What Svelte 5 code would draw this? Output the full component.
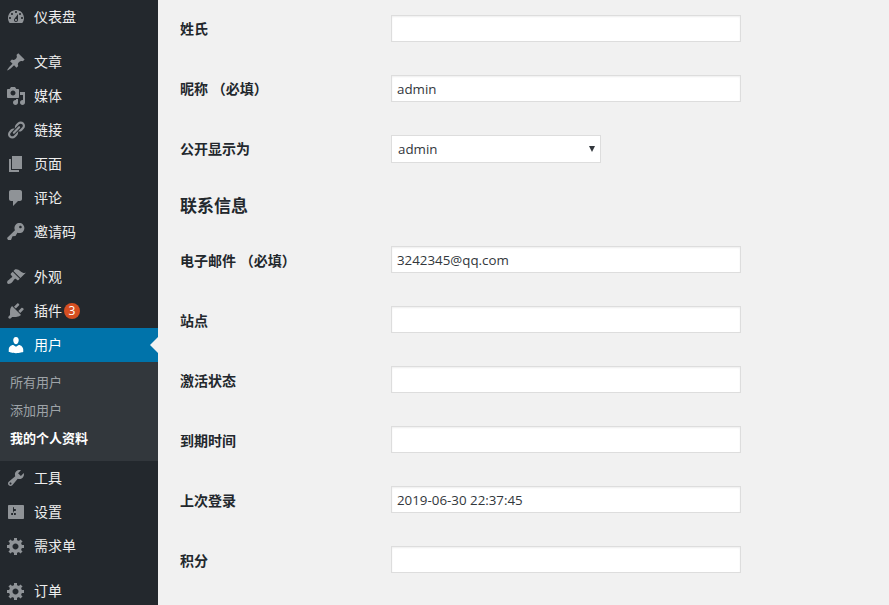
<script>
  // dashicons outlines used by the admin menu
  const icons = {
    dashboard: "M3.76 16h12.48c1.1-1.37 1.76-3.11 1.76-5 0-4.42-3.58-8-8-8s-8 3.58-8 8c0 1.89.66 3.63 1.76 5zM10 4c.55 0 1 .45 1 1s-.45 1-1 1-1-.45-1-1 .45-1 1-1zM6 6c.55 0 1 .45 1 1s-.45 1-1 1-1-.45-1-1 .45-1 1-1zm8 0c.55 0 1 .45 1 1s-.45 1-1 1-1-.45-1-1 .45-1 1-1zm-5.37 5.55L12 7v6c0 1.1-.9 2-2 2s-2-.9-2-2c0-.57.24-1.08.63-1.45zM4 10c.55 0 1 .45 1 1s-.45 1-1 1-1-.45-1-1 .45-1 1-1zm12 0c.55 0 1 .45 1 1s-.45 1-1 1-1-.45-1-1 .45-1 1-1zm-5 3c0-.55-.45-1-1-1s-1 .45-1 1 .45 1 1 1 1-.45 1-1z",
    post: "M10.44 3.02l1.82-1.82 6.36 6.35-1.83 1.82c-1.05-.68-2.48-.57-3.41.36l-.75.75c-.92.93-1.04 2.35-.35 3.41l-1.83 1.82-2.41-2.41-2.8 2.79c-.42.42-3.38 2.71-3.8 2.29s1.86-3.39 2.28-3.81l2.79-2.79L4.1 9.36l1.83-1.82c1.05.69 2.48.57 3.4-.36l.75-.75c.93-.92 1.05-2.35.36-3.41z",
    media: "M13 11V4c0-.55-.45-1-1-1h-1.67L9 1H5L3.67 3H2c-.55 0-1 .45-1 1v7c0 .55.45 1 1 1h10c.55 0 1-.45 1-1zM7 4.5c1.38 0 2.5 1.12 2.5 2.5S8.38 9.5 7 9.5 4.5 8.38 4.5 7 5.62 4.5 7 4.5zM14 6h5v10.5c0 1.38-1.12 2.5-2.5 2.5S14 17.88 14 16.5s1.12-2.5 2.5-2.5c.17 0 .34.02.5.05V9h-3V6zm-4 8.05V13h2v3.5c0 1.38-1.12 2.5-2.5 2.5S7 17.88 7 16.5 8.12 14 9.5 14c.17 0 .34.02.5.05z",
    links: "M17.74 2.76c1.68 1.69 1.68 4.41 0 6.1l-1.53 1.52c-1.12 1.12-2.7 1.47-4.14 1.09l2.62-2.61.76-.77.76-.76c.84-.84.84-2.2 0-3.04-.84-.85-2.2-.85-3.04 0l-.77.76-3.38 3.38c-.37-1.44-.02-3.02 1.1-4.14l1.52-1.53c1.69-1.68 4.42-1.68 6.1 0zM8.59 13.43l5.34-5.34c.42-.42.42-1.1 0-1.52-.44-.43-1.13-.39-1.53 0l-5.33 5.34c-.42.42-.42 1.1 0 1.52.44.43 1.13.39 1.52 0zm-.76 2.29l4.14-4.15c.38 1.44.03 3.02-1.09 4.14l-1.52 1.53c-1.69 1.68-4.41 1.68-6.1 0-1.68-1.68-1.68-4.42 0-6.1l1.53-1.52c1.12-1.12 2.7-1.47 4.14-1.1l-4.14 4.15c-.85.84-.85 2.2 0 3.05.84.84 2.2.84 3.04 0z",
    page: "M6 15V2h10v13H6zm-1 1h8v2H3V5h2v11z",
    comments: "M5 2h9c1.1 0 2 .9 2 2v7c0 1.1-.9 2-2 2h-2l-5 5v-5H5c-1.1 0-2-.9-2-2V4c0-1.1.9-2 2-2z",
    key: "M16.95 2.58c1.96 1.95 1.96 5.12 0 7.07-1.51 1.51-3.75 1.84-5.59 1.01l-1.87 3.31-2.99.31L5 18H2l-1-2 7.95-7.69c-.92-1.87-.62-4.18.93-5.73 1.95-1.96 5.12-1.96 7.07 0zm-2.51 3.79c.74 0 1.33-.6 1.33-1.34 0-.73-.59-1.33-1.33-1.33-.73 0-1.33.6-1.33 1.33 0 .74.6 1.34 1.33 1.34z",
    appearance: "M14.48 11.06L7.41 3.99l1.5-1.5c.5-.56 2.3-.47 3.51.32 1.21.8 1.43 1.28 2.91 2.1 1.18.64 2.45 1.26 4.45.85zm-.71.71L6.7 4.7 4.93 6.47c-.39.39-.39 1.02 0 1.41l1.06 1.06c.39.39.39 1.03 0 1.42-.6.6-1.43 1.11-2.21 1.69-.35.26-.7.53-1.01.84C1.43 13.23.5 15.64 1.5 16.5c.86 1 3.27.07 4.61-1.27.31-.31.58-.66.84-1.01.58-.78 1.09-1.61 1.69-2.21.39-.39 1.03-.39 1.42 0l1.06 1.06c.39.39 1.02.39 1.41 0z",
    plugins: "M13.11 4.36L9.87 7.6 8 5.73l3.24-3.24c.35-.34 1.05-.2 1.56.32.52.51.66 1.21.31 1.55zm-8 1.77l.91-1.12 9.01 9.01-1.19.84c-.71.71-2.63 1.16-3.82 1.16H6.14L4.9 17.26c-.59.59-1.54.59-2.12 0-.59-.58-.59-1.53 0-2.12l1.24-1.24v-3.88c0-1.13.4-3.19 1.09-3.89zm7.26 3.97l3.24-3.24c.34-.35 1.04-.21 1.55.31.52.51.66 1.21.31 1.55l-3.24 3.25z",
    users: "M10 9.25c-2.27 0-2.73-3.44-2.73-3.44C7 4.02 7.82 2 9.97 2c2.16 0 2.98 2.02 2.71 3.81 0 0-.41 3.44-2.68 3.44zm0 2.57L12.72 10c2.39 0 4.52 2.33 4.52 4.53v2.49s-3.65 1.13-7.24 1.13c-3.65 0-7.24-1.13-7.24-1.13v-2.49c0-2.25 1.94-4.48 4.47-4.48z",
    tools: "M16.68 9.77c-1.34 1.34-3.3 1.67-4.95.99l-5.41 6.52c-.99.99-2.59.99-3.58 0s-.99-2.59 0-3.57l6.52-5.42c-.68-1.65-.35-3.61.99-4.95 1.28-1.28 3.12-1.62 4.72-1.06l-2.89 2.89 2.82 2.82 2.86-2.87c.53 1.58.18 3.39-1.08 4.65zM3.81 16.21c.4.39 1.04.39 1.43 0 .4-.4.4-1.04 0-1.43-.39-.4-1.03-.4-1.43 0-.39.39-.39 1.03 0 1.43z",
    settings: "M18 16V4c0-.55-.45-1-1-1H3c-.55 0-1 .45-1 1v12c0 .55.45 1 1 1h14c.55 0 1-.45 1-1zM8 11h1c.55 0 1 .45 1 1s-.45 1-1 1H8v1.5c0 .28-.22.5-.5.5s-.5-.22-.5-.5V13H6c-.55 0-1-.45-1-1s.45-1 1-1h1V5.5c0-.28.22-.5.5-.5s.5.22.5.5V7h1c.55 0 1 .45 1 1s-.45 1-1 1h-1v5.5c0 .28-.22.5-.5.5s-.5-.22-.5-.5V9z",
    generic: "M18 12h-2.18c-.17.7-.44 1.35-.81 1.93l1.54 1.54-2.1 2.1-1.54-1.54c-.58.36-1.23.63-1.91.79V19H8v-2.18c-.68-.16-1.33-.43-1.91-.79l-1.54 1.54-2.12-2.12 1.54-1.54c-.36-.58-.63-1.23-.79-1.91H1V9.03h2.17c.16-.7.44-1.35.8-1.94L2.43 5.55l2.1-2.1 1.54 1.54c.58-.37 1.24-.64 1.93-.81V2h3v2.18c.68.16 1.33.43 1.91.79l1.54-1.54 2.12 2.12-1.54 1.54c.36.59.64 1.24.8 1.94H18V12zm-8.5 1.5c1.66 0 3-1.34 3-3s-1.34-3-3-3-3 1.34-3 3 1.34 3 3 3z"
  };

  const menu = [
    { label: "仪表盘", icon: "dashboard" },
    { label: "文章", icon: "post", sep: true },
    { label: "媒体", icon: "media" },
    { label: "链接", icon: "links" },
    { label: "页面", icon: "page" },
    { label: "评论", icon: "comments" },
    { label: "邀请码", icon: "key" },
    { label: "外观", icon: "appearance", sep: true },
    { label: "插件", icon: "plugins", badge: 3 },
    { label: "用户", icon: "users", active: true, sub: ["所有用户", "添加用户", "我的个人资料"] },
    { label: "工具", icon: "tools" },
    { label: "设置", icon: "settings" },
    { label: "需求单", icon: "generic" },
    { label: "订单", icon: "generic", sep: true }
  ];

  const nameRows = [
    { label: "姓氏", value: "" },
    { label: "昵称 （必填）", value: "admin" }
  ];

  const contactRows = [
    { label: "电子邮件 （必填）", value: "3242345@qq.com" },
    { label: "站点", value: "" },
    { label: "激活状态", value: "" },
    { label: "到期时间", value: "" },
    { label: "上次登录", value: "2019-06-30 22:37:45" },
    { label: "积分", value: "" }
  ];
</script>

<div class="layout">
  <nav class="sidebar">
    {#each menu as item}
      <a href="#top" class="item" class:sep={item.sep} class:active={item.active}>
        <svg class="icon" viewBox="0 0 20 20" width="20" height="20"><path fill-rule="evenodd" d={icons[item.icon]} /></svg>
        <span class="text">{item.label}</span>
        {#if item.badge}<span class="badge">{item.badge}</span>{/if}
      </a>
      {#if item.sub}
        <ul class="submenu">
          {#each item.sub as entry, i}
            <li class:current={i === 2}>{entry}</li>
          {/each}
        </ul>
      {/if}
    {/each}
  </nav>

  <main class="content">
    {#each nameRows as row}
      <div class="row">
        <label for={row.label}>{row.label}</label>
        <input id={row.label} type="text" value={row.value} />
      </div>
    {/each}
    <div class="row">
      <label for="display">公开显示为</label>
      <span class="select-wrap">
        <select id="display"><option>admin</option></select>
      </span>
    </div>
    <h2>联系信息</h2>
    <div class="contact">
      {#each contactRows as row}
        <div class="row">
          <label for={row.label}>{row.label}</label>
          <input id={row.label} type="text" value={row.value} />
        </div>
      {/each}
    </div>
  </main>
</div>

<style>
  :global(body) {
    background: #f1f1f1;
    overflow: hidden;
  }

  .layout {
    display: flex;
    height: 605px;
    overflow: hidden;
    font-family: "Open Sans", "Noto Sans CJK SC", sans-serif;
    font-size: 14px;
    color: #23282d;
  }

  .sidebar {
    width: 158px;
    flex-shrink: 0;
    background: #23282d;
    overflow: hidden;
  }

  .item {
    position: relative;
    display: flex;
    align-items: center;
    height: 34px;
    padding-left: 6px;
    color: #eee;
    text-decoration: none;
  }

  .item.sep {
    margin-top: 11px;
  }

  .item.active {
    background: #0073aa;
    color: #fff;
  }

  /* pointer towards the content area */
  .item.active::after {
    content: "";
    position: absolute;
    right: 0;
    top: 50%;
    margin-top: -8px;
    border: 8px solid transparent;
    border-right-color: #f1f1f1;
    border-left-width: 0;
  }

  .icon {
    flex-shrink: 0;
    margin-right: 8px;
    fill: #8f9397;
  }

  .active .icon {
    fill: #fff;
  }

  .text {
    margin-bottom: 2px;
  }

  .badge {
    width: 16px;
    height: 16px;
    margin-left: 2px;
    border-radius: 50%;
    background: #d54e21;
    color: #fff;
    font-size: 12px;
    line-height: 16px;
    text-align: center;
  }

  .submenu {
    list-style: none;
    margin: 0;
    padding: 7px 0 8px 10px;
    background: #32373c;
    color: #9ea3a8;
    font-size: 13px;
  }

  .submenu li {
    height: 28px;
    line-height: 26px;
  }

  .submenu .current {
    color: #fff;
    font-weight: 600;
  }

  .content {
    flex: 1;
    padding-left: 22px;
    margin-top: -2px;
  }

  .row {
    display: flex;
    align-items: center;
    height: 60px;
  }

  .row label {
    width: 211px;
    flex-shrink: 0;
    font-weight: 600;
    font-size: 14px;
    white-space: pre;
  }

  input {
    width: 350px;
    height: 27px;
    box-sizing: border-box;
    padding: 2px 5px 0;
    border: 1px solid #ddd;
    box-shadow: inset 0 1px 2px rgba(0, 0, 0, 0.07);
    background: #fff;
    color: #32373c;
    font: 13.33px "Open Sans", sans-serif;
    outline: none;
  }

  .contact input {
    margin-top: -1px;
    padding-top: 0;
  }

  .select-wrap {
    position: relative;
    display: block;
    margin-top: 1px;
  }

  .select-wrap::after {
    content: "";
    position: absolute;
    right: 6px;
    top: 11px;
    border: 3.5px solid transparent;
    border-top: 6px solid #32373c;
    border-bottom-width: 0;
    pointer-events: none;
  }

  select {
    display: block;
    width: 210px;
    height: 28px;
    box-sizing: border-box;
    padding: 0 6px;
    border: 1px solid #ddd;
    border-radius: 0;
    background: #fff;
    color: #32373c;
    font: 13.33px "Open Sans", sans-serif;
    appearance: none;
    outline: none;
  }

  h2 {
    margin: 0;
    height: 52px;
    line-height: 56px;
    font-size: 17px;
    font-weight: 600;
  }
</style>
